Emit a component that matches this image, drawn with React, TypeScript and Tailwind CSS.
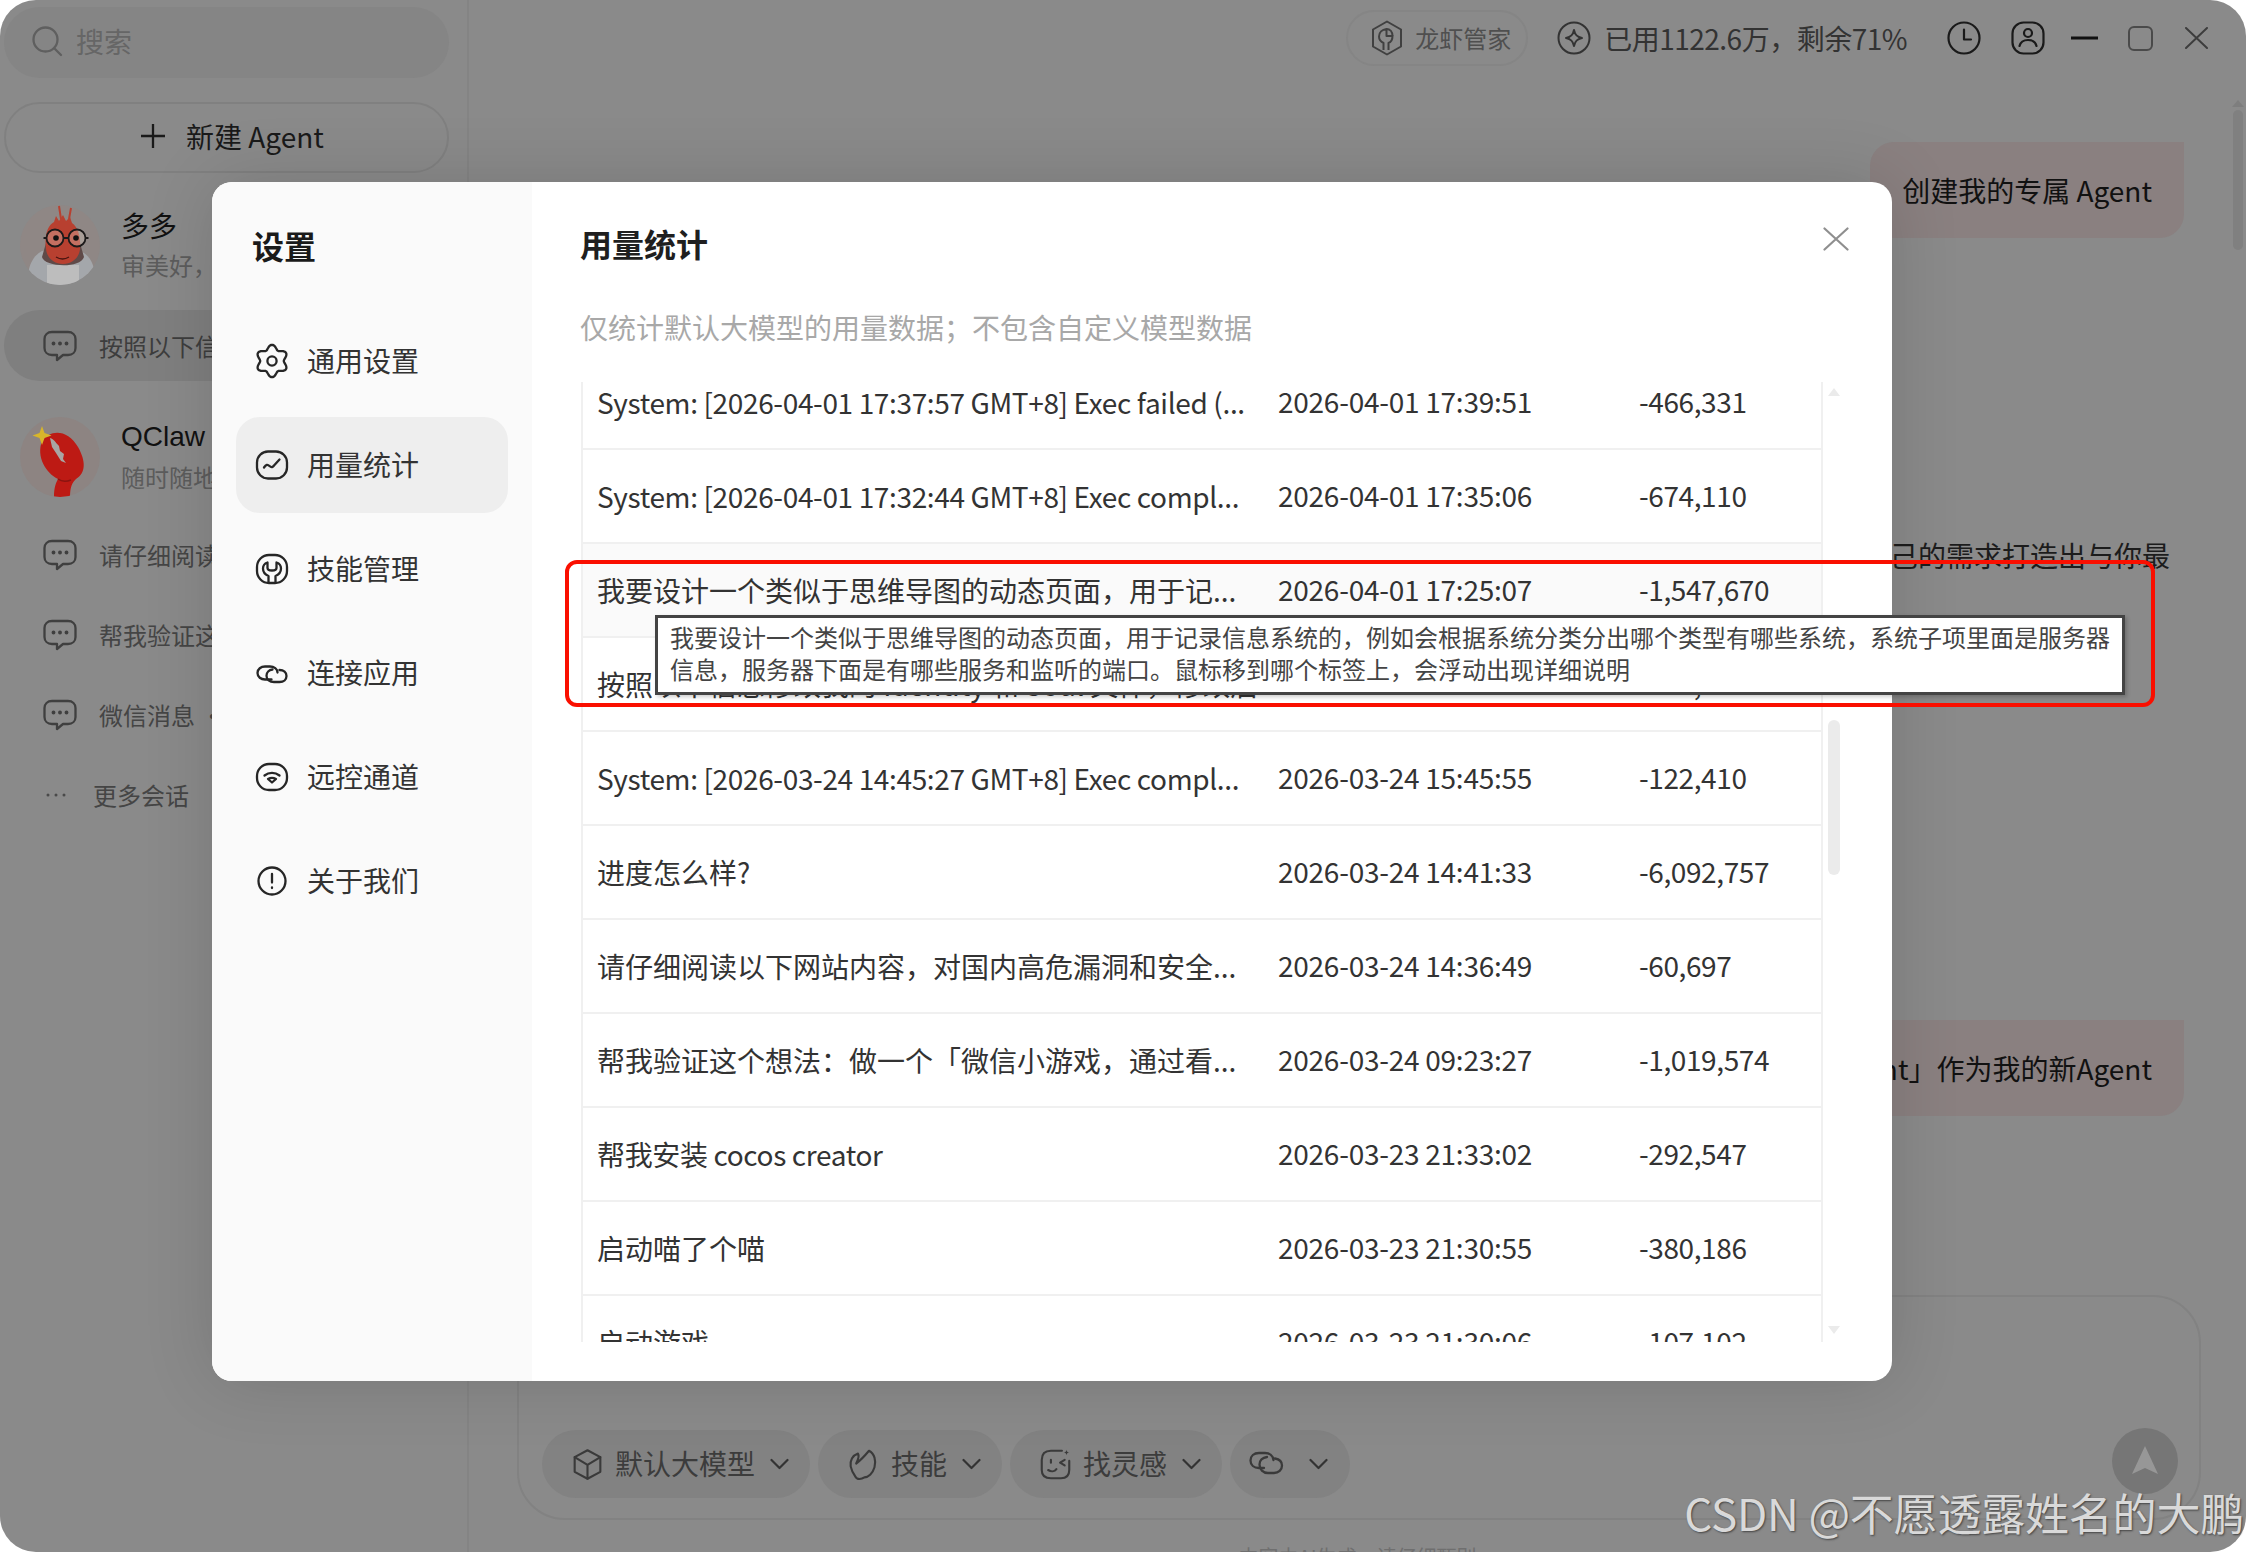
import type { ReactNode } from 'react';

function gearPath() {
  const pts: string[] = [];
  for (let i = 0; i < 96; i++) {
    const t = (i / 96) * Math.PI * 2;
    const r = 14 + 2.2 * Math.cos(6 * t);
    pts.push(`${(18 + r * Math.sin(t)).toFixed(2)} ${(18 - r * Math.cos(t)).toFixed(2)}`);
  }
  return 'M' + pts.join('L') + 'Z';
}

function Icon({ className = '', size = 36, children }: { className?: string; size?: number; children: ReactNode }) {
  return (
    <svg
      viewBox="0 0 36 36"
      width={size}
      height={size}
      fill="none"
      stroke="currentColor"
      strokeWidth={2.3}
      strokeLinecap="round"
      strokeLinejoin="round"
      className={`shrink-0 ${className}`}
    >
      {children}
    </svg>
  );
}

const navItems: { label: string; active?: boolean; icon: ReactNode }[] = [
  {
    label: '通用设置',
    icon: (
      <>
        <path d={gearPath()} />
        <circle cx="18" cy="18" r="4.6" />
      </>
    ),
  },
  {
    label: '用量统计',
    active: true,
    icon: (
      <>
        <rect x="3" y="4.5" width="30" height="27" rx="11" />
        <path d="M10 20.5c2-3 3.5-3.5 5.5-1.5s3.5 1 4.5-.5l5.5-6" />
      </>
    ),
  },
  {
    label: '技能管理',
    icon: (
      <>
        <rect x="3" y="4" width="30" height="28" rx="12" />
        <path d="M14.5 31.5V25c-3.500-1.500-5.500-4-5.500-7.500 0-3 1.500-5 4.500-6v5.500c0 1.500 2 2.500 4.500 2.500s4.500-1 4.500-2.500v-5.500c3 1 4.500 3 4.500 6 0 3.500-2 6-5.500 7.500v6.500" />
      </>
    ),
  },
  {
    label: '连接应用',
    icon: (
      <>
        <path d="M17.500 24.500h-6.500c-4 0-7.500-2.500-7.500-6.500s3.500-6.500 7.500-6.500h5c4 0 7.500 2.500 7.500 6" />
        <path d="M18.500 14.500c-3.500.5-6 3-6 6.200 0 3.800 3.200 6.300 7.500 6.300h5.500c4.200 0 7-2.500 7-6s-2.800-6-7-6" />
      </>
    ),
  },
  {
    label: '远控通道',
    icon: (
      <>
        <rect x="3" y="5" width="30" height="26" rx="12" />
        <path d="M10.500 16.500c4.500-3.500 10.500-3.500 15 0" />
        <path d="M18 23.500l-4-3.500c2.500-1.500 5.500-1.500 8 0z" />
      </>
    ),
  },
  {
    label: '关于我们',
    icon: (
      <>
        <circle cx="18" cy="18" r="13.500" />
        <path d="M18 11v8.500" />
        <path d="M18 24.500v.5" />
      </>
    ),
  },
];

const rows: { text: string; time: string; amount: string; hover?: boolean; latin?: boolean }[] = [
  { text: 'System: [2026-04-01 17:37:57 GMT+8] Exec failed (...', time: '2026-04-01 17:39:51', amount: '-466,331', latin: true },
  { text: 'System: [2026-04-01 17:32:44 GMT+8] Exec compl...', time: '2026-04-01 17:35:06', amount: '-674,110', latin: true },
  { text: '我要设计一个类似于思维导图的动态页面，用于记...', time: '2026-04-01 17:25:07', amount: '-1,547,670', hover: true },
  { text: '按照以下信息修改我的 Identity 和 Soul 文件，修改后', time: '2026-03-31 11:20:16', amount: '-208,415' },
  { text: 'System: [2026-03-24 14:45:27 GMT+8] Exec compl...', time: '2026-03-24 15:45:55', amount: '-122,410', latin: true },
  { text: '进度怎么样?', time: '2026-03-24 14:41:33', amount: '-6,092,757' },
  { text: '请仔细阅读以下网站内容，对国内高危漏洞和安全...', time: '2026-03-24 14:36:49', amount: '-60,697' },
  { text: '帮我验证这个想法：做一个「微信小游戏，通过看...', time: '2026-03-24 09:23:27', amount: '-1,019,574' },
  { text: '帮我安装 cocos creator', time: '2026-03-23 21:33:02', amount: '-292,547', latin: true },
  { text: '启动喵了个喵', time: '2026-03-23 21:30:55', amount: '-380,186' },
  { text: '启动游戏', time: '2026-03-23 21:30:06', amount: '-107,102' },
];

function ChatIcon() {
  return (
    <Icon className="text-[#3f3f3f]">
      <path d="M10 4h16c4.500 0 7.500 3 7.500 7v9c0 4-3 7-7.500 7h-5l-6 5v-5h-5c-4.500 0-7.500-3-7.500-7v-9c0-4 3-7 7.500-7z" />
      <circle cx="11.500" cy="15.500" r=".8" fill="currentColor" />
      <circle cx="18" cy="15.500" r=".8" fill="currentColor" />
      <circle cx="24.500" cy="15.500" r=".8" fill="currentColor" />
    </Icon>
  );
}

function Chevron({ className = '' }: { className?: string }) {
  return (
    <svg viewBox="0 0 19 12" width={19} height={12} fill="none" stroke="#333" strokeWidth={2.2} strokeLinecap="round" strokeLinejoin="round" className={`shrink-0 ${className}`}>
      <path d="M1.500 2l8 8 8-8" />
    </svg>
  );
}

function DuoAvatar() {
  return (
    <svg viewBox="0 0 80 80" width={80} height={80} className="shrink-0">
      <defs>
        <clipPath id="duo-clip">
          <circle cx="40" cy="40" r="40" />
        </clipPath>
      </defs>
      <g clipPath="url(#duo-clip)">
        <rect width="80" height="80" fill="#8f8785" />
        <path d="M8 80c-1-16 3-28 14-34l8-2h26l8 4c9 6 12 18 11 32z" fill="#a4a7ab" />
        <path d="M27 80V60h32v20z" fill="#bdbdbd" />
        <path d="M22 52c2 10 38 12 42 0l-4-14H26z" fill="#5f4a48" />
        <path d="M26 44c-2-14 2-24 8-27l2-6 3 5 4-6 3 6 4-4 2 6c6 4 9 14 8 26-1 9-8 15-17 15s-16-6-17-15z" fill="#b84030" />
        <path d="M36 52c4 2.500 9 2.500 13 0" stroke="#4a1410" strokeWidth="1.400" fill="none" />
      </g>
      <path d="M41 14L39 1M49 14l2-11" stroke="#b84030" strokeWidth="2" fill="none" />
      <g fill="none" stroke="#1c1a1a" strokeWidth="1.800">
        <circle cx="35" cy="33" r="8.500" fill="#d9c9bd" fillOpacity="0.35" />
        <circle cx="57" cy="33" r="8.500" fill="#d9c9bd" fillOpacity="0.35" />
        <path d="M43.500 33h5M26.500 33h-3M65.500 33h3" />
      </g>
      <circle cx="36" cy="33" r="2.800" fill="#111" />
      <circle cx="56" cy="33" r="2.800" fill="#111" />
    </svg>
  );
}

function ClawAvatar() {
  return (
    <svg viewBox="0 0 80 80" width={80} height={80} className="shrink-0">
      <defs>
        <clipPath id="claw-clip">
          <circle cx="40" cy="40" r="40" />
        </clipPath>
      </defs>
      <g clipPath="url(#claw-clip)">
        <rect width="80" height="80" fill="#8d8482" />
        <path d="M22 24C30 12 48 12 58 30c8 14 8 26-2 32-4 4-6 8-6 18H34c0-10 2-14 4-18C26 56 16 40 22 24z" fill="#bd1a14" />
        <path d="M30 21c4 1 6 5 9 8l1 5 4 3-1 5 3 4-5-2-5-8-4-6z" fill="#a9a5a3" />
        <path d="M38 62c4 3 8 3 13 1" stroke="#8a1410" strokeWidth="1.500" fill="none" />
      </g>
      <path d="M22 9l2.500 7 7 2.500-7 2.500-2.500 7-2.500-7-7-2.500 7-2.500z" fill="#d8b52a" />
    </svg>
  );
}

function Session({ label }: { label: string }) {
  return (
    <div className="flex h-[80px] items-center gap-[21px] pl-[38px]">
      <ChatIcon />
      <span className="whitespace-nowrap text-[24px] text-[#454545]">{label}</span>
    </div>
  );
}

function LeftPanel() {
  return (
    <aside className="flex w-[469px] shrink-0 flex-col border-r-2 border-[#848484] pl-[4px] pr-[18px] pt-[7px]">
      <div className="flex h-[71px] shrink-0 items-center gap-[13px] rounded-full bg-[#858585] pb-[4px] pl-[27px]">
        <svg viewBox="0 0 32 32" width={32} height={32} fill="none" stroke="#5f5f5f" strokeWidth={2.300} strokeLinecap="round">
          <circle cx="14.500" cy="14.500" r="12" />
          <path d="M24 24l6 6" />
        </svg>
        <span className="text-[28px] text-[#666]">搜索</span>
      </div>
      <div className="mt-[24px] flex h-[71px] shrink-0 items-center justify-center gap-[21px] rounded-full border-2 border-[#808080] pb-[4px] pl-[12px] text-[28px] text-[#1a1a1a]">
        <svg viewBox="0 0 24 24" width={24} height={24} fill="none" stroke="#1a1a1a" strokeWidth={2.300}>
          <path d="M12 0v24M0 12h24" />
        </svg>
        <span>新建 Agent</span>
      </div>
      <div className="ml-[16px] mt-[32px] flex h-[80px] shrink-0 items-center gap-[21px]">
        <DuoAvatar />
        <div className="flex flex-col gap-[6px] pb-[3px]">
          <span className="text-[28px] leading-[36px] text-[#111]">多多</span>
          <span className="whitespace-nowrap text-[24px] leading-[32px] text-[#5c5c5c]">审美好，有想法的搭子</span>
        </div>
      </div>
      <div className="mt-[25px] flex h-[71px] shrink-0 items-center gap-[21px] rounded-full bg-[#7f7f7f] pl-[38px]">
        <ChatIcon />
        <span className="whitespace-nowrap text-[24px] text-[#3d3d3d]">按照以下信息修改</span>
      </div>
      <div className="ml-[16px] mt-[36px] flex h-[80px] shrink-0 items-center gap-[21px]">
        <ClawAvatar />
        <div className="flex flex-col gap-[6px] pb-[3px]">
          <span className="font-['Liberation_Sans',sans-serif] text-[28px] leading-[36px] text-[#111]">QClaw</span>
          <span className="whitespace-nowrap text-[24px] leading-[32px] text-[#5c5c5c]">随时随地帮你做事</span>
        </div>
      </div>
      <div className="mt-[18px] flex flex-col">
        <Session label="请仔细阅读以下" />
        <Session label="帮我验证这个想" />
        <Session label="微信消息 · 今天" />
        <div className="flex h-[80px] items-center gap-[27px] pl-[42px] text-[#454545]">
          <svg viewBox="0 0 20 4" width={20} height={4} className="shrink-0">
            <circle cx="2" cy="2" r="1.500" fill="#4a4a4a" />
            <circle cx="10" cy="2" r="1.500" fill="#4a4a4a" />
            <circle cx="18" cy="2" r="1.500" fill="#4a4a4a" />
          </svg>
          <span className="text-[24px]">更多会话</span>
        </div>
      </div>
    </aside>
  );
}

function TopBar() {
  return (
    <div className="flex h-[76px] shrink-0 items-start justify-end pr-[38px] pt-[10px]">
      <div className="flex h-[56px] w-[182px] items-center gap-[11px] rounded-full border-2 border-[#858585] pl-[22px] text-[24px] text-[#4f4f4f]">
        <svg viewBox="0 0 34 36" width={34} height={36} fill="none" stroke="#404040" strokeWidth={2} strokeLinejoin="round" className="shrink-0">
          <path d="M17 1.500l14 8v17l-14 8-14-8v-17z" />
          <path d="M13.500 30v-7c-3-1.500-4.500-4-4.500-6.500 0-4 3-7 7.500-7.500V16h6c0 3.500-1.500 6-4 7v7" />
          <path d="M16.500 9c3.500 0 6 3 6 7" />
        </svg>
        <span>龙虾管家</span>
      </div>
      <div className="ml-[29px] flex h-[56px] items-center gap-[13px] text-[28px] tracking-[-0.5px] text-[#333]">
        <svg viewBox="0 0 34 34" width={34} height={34} fill="none" stroke="#333" strokeWidth={2} strokeLinejoin="round" className="shrink-0">
          <circle cx="17" cy="17" r="15.500" />
          <path d="M17 9c1 5 3 7 8 8-5 1-7 3-8 8-1-5-3-7-8-8 5-1 7-3 8-8z" />
        </svg>
        <span className="whitespace-nowrap">已用1122.6万，剩余71%</span>
      </div>
      <div className="ml-[40px] flex h-[56px] items-center gap-[30px]">
        <svg viewBox="0 0 34 34" width={34} height={34} fill="none" stroke="#1a1a1a" strokeWidth={2.200} strokeLinecap="round" strokeLinejoin="round">
          <circle cx="17" cy="17" r="15.500" />
          <path d="M17 8.500V18.500h7" />
        </svg>
        <svg viewBox="0 0 34 34" width={34} height={34} fill="none" stroke="#1a1a1a" strokeWidth={2.200} strokeLinecap="round">
          <rect x="1.500" y="1.500" width="31" height="31" rx="11" />
          <circle cx="17" cy="12" r="4" />
          <path d="M8.500 25c1-4 4.500-6 8.500-6s7.500 2 8.500 6" />
        </svg>
        <svg viewBox="0 0 27 4" width={27} height={4} className="ml-[-4px]">
          <rect width="27" height="3" y=".5" fill="#111" />
        </svg>
        <svg viewBox="0 0 25 25" width={25} height={25} fill="none" stroke="#4a4a4a" strokeWidth={2}>
          <rect x="1" y="1" width="23" height="23" rx="5" />
        </svg>
        <svg viewBox="0 0 23 22" width={23} height={22} fill="none" stroke="#3d3d3d" strokeWidth={2} strokeLinecap="round" className="ml-[2px]">
          <path d="M1 1l21 20M22 1L1 21" />
        </svg>
      </div>
    </div>
  );
}

function Pill({ icon, label, textGap = 'gap-[11px]', width }: { icon: ReactNode; label?: string; textGap?: string; width: string }) {
  return (
    <div className={`flex h-[68px] items-center rounded-full bg-[#828282] pl-[29px] ${textGap} ${width}`}>
      {icon}
      {label && <span className="whitespace-nowrap pb-[3px] text-[28px] text-[#3c3c3c]">{label}</span>}
      <Chevron className="ml-[4px]" />
    </div>
  );
}

function ChatPanel() {
  return (
    <main className="relative flex h-[1552px] min-w-0 flex-1 flex-col overflow-hidden">
      <TopBar />
      <div className="ml-auto mr-[62px] mt-[66px] flex h-[96px] shrink-0 items-center rounded-[24px] rounded-tr-none bg-[#8a8080] px-[32px] text-[28px] text-[#111]">
        创建我的专属 Agent
      </div>
      <p className="ml-auto mr-[76px] mt-[297px] h-[40px] shrink-0 whitespace-nowrap text-[28px] leading-[40px] text-[#1c1c1c]">
        告诉我你自己的需求打造出与你最
      </p>
      <div className="ml-auto mr-[62px] mt-[445px] flex h-[96px] shrink-0 items-center whitespace-nowrap rounded-[24px] rounded-tr-none bg-[#8a8080] px-[32px] text-[28px] text-[#111]">
        创建「Agent」作为我的新Agent
      </div>
      <div className="ml-[48px] mr-[45px] mt-[179px] flex h-[225px] shrink-0 items-end justify-between rounded-[48px] border-2 border-[#828282] pb-[20px] pl-[23px] pr-[21px]">
        <div className="flex gap-[8px]">
          <Pill
            width="w-[268px]"
            icon={
              <Icon size={33} className="text-[#3a3a3a]">
                <path d="M18 2.500l14 7.500v16l-14 7.500-14-7.500V10z" />
                <path d="M4 10l14 8.500L32 10M18 18.500v15" />
              </Icon>
            }
            label="默认大模型"
          />
          <Pill
            width="w-[184px]"
            icon={
              <Icon size={33} className="text-[#3a3a3a]">
                <path d="M24 3c6 3 8 11 6 18-2 7-7 11-11 11-3 2-8 3-10-1-2-3-4-6-5-11-1-6 2-12 8-14 2 3 0 7-2 11 4-3 9-8 14-14z" />
              </Icon>
            }
            label="技能"
          />
          <Pill
            width="w-[212px]"
            icon={
              <Icon size={33} className="text-[#3a3a3a]">
                <path d="M25 3H13C6 3 3 7 3 13v11c0 6 4 9 10 9h11c6 0 9-3 9-9V14" />
                <path d="M13 13v3M28 13l-5 3 5 3" />
                <path d="M10 24c3 2 7 2 9-1" />
                <path d="M30 2c.4 2 1 3 3 3-2 .3-2.600 1-3 3-.4-2-1-2.700-3-3 2-.3 2.600-1 3-3z" fill="currentColor" stroke="none" />
              </Icon>
            }
            label="找灵感"
          />
          <Pill
            width="w-[120px]"
            textGap="gap-[21px]"
            icon={
              <Icon size={36} className="ml-[-11px] text-[#3a3a3a]">
                <path d="M16 22h-5C6 22 2.500 19 2.500 14.500S6 7 11 7h6c4.500 0 8 2.500 8.500 7" />
                <path d="M19 11c-4.500.5-7.500 3.500-7.500 7.500 0 5 3.500 8.500 8.500 8.500h6c4.500 0 8-3 8-7.500S30 13 27 12.500" />
              </Icon>
            }
          />
        </div>
        <div className="mb-[4px] flex h-[66px] w-[66px] items-center justify-center rounded-full bg-[#767676]">
          <svg viewBox="0 0 28 32" width={28} height={32}>
            <path d="M14 1l13 28-13-6-13 6z" fill="#979797" />
          </svg>
        </div>
      </div>
      <p className="mt-[23px] shrink-0 whitespace-nowrap text-center text-[20px] leading-[28px] text-[#6f6f6f]">内容由AI生成，请仔细甄别</p>
      <div className="absolute right-[2px] top-[100px] flex flex-col items-center">
        <div className="h-0 w-0 border-x-[6px] border-b-[7px] border-x-transparent border-b-[#7e7e7e]" />
        <div className="mt-[3px] h-[140px] w-[10px] rounded-full bg-[#808080]" />
      </div>
    </main>
  );
}

function SettingsNav() {
  return (
    <nav className="flex w-[320px] shrink-0 flex-col bg-[#fafafa] pt-[43px]">
      <h2 className="pl-[40px] text-[32px] font-bold leading-[40px] text-[#1a1a1a]">设置</h2>
      <ul className="mt-[48px] flex flex-col gap-[8px] px-[24px]">
        {navItems.map((item) => (
          <li
            key={item.label}
            className={`flex h-[96px] items-center gap-[17px] rounded-[24px] pl-[18px] text-[28px] text-[#333] ${item.active ? 'bg-[#eeeeee]' : ''}`}
          >
            <Icon className="text-[#262626]">{item.icon}</Icon>
            <span className="pb-[3px]">{item.label}</span>
          </li>
        ))}
      </ul>
    </nav>
  );
}

function UsageTable() {
  return (
    <div className="mt-[35px] flex h-[960px]">
      <div className="h-full w-[1242px] overflow-hidden border-x-2 border-[#f0f0f0]">
        <div className="mt-[-26px]">
          {rows.map((row) => (
            <div
              key={row.time}
              className={`flex h-[94px] items-center border-b-2 border-[#f0f0f0] pl-[14px] text-[28px] text-[#333] ${row.hover ? 'bg-[#fafafa]' : ''}`}
            >
              <span className={`w-[681px] shrink-0 overflow-hidden whitespace-nowrap ${row.latin ? 'tracking-[-0.36px]' : ''}`}>{row.text}</span>
              <span className="w-[361px] shrink-0 whitespace-nowrap pb-[3px] tracking-[-0.25px]">{row.time}</span>
              <span className="whitespace-nowrap pb-[3px] tracking-[-0.4px]">{row.amount}</span>
            </div>
          ))}
        </div>
      </div>
      <div className="ml-[5px] flex w-[12px] flex-col items-center pt-[6px]">
        <div className="h-0 w-0 border-x-[6px] border-b-[8px] border-x-transparent border-b-[#ebebeb]" />
        <div className="mt-[324px] h-[155px] w-[12px] rounded-full bg-[#ebebeb]" />
        <div className="mt-[451px] h-0 w-0 border-x-[6px] border-t-[8px] border-x-transparent border-t-[#ebebeb]" />
      </div>
    </div>
  );
}

function SettingsDialog() {
  return (
    <div className="absolute left-[212px] top-[182px] flex h-[1199px] w-[1680px] overflow-hidden rounded-[20px] bg-white shadow-[0_0_70px_rgba(0,0,0,0.14)]">
      <SettingsNav />
      <section className="relative flex-1 pl-[49px] pt-[41px]">
        <h1 className="ml-[-1px] text-[32px] font-bold leading-[40px] text-[#1f1f1f]">用量统计</h1>
        <p className="ml-[-1px] mt-[44px] text-[28px] leading-[40px] text-[#a8a8a8]">仅统计默认大模型的用量数据；不包含自定义模型数据</p>
        <UsageTable />
        <svg viewBox="0 0 26 24" width={26} height={24} fill="none" stroke="#8f8f8f" strokeWidth={2.200} strokeLinecap="round" className="absolute right-[43px] top-[45px]">
          <path d="M1.500 1.500l23 21M24.500 1.500l-23 21" />
        </svg>
      </section>
    </div>
  );
}

export default function App() {
  return (
    <div className="relative h-[1552px] w-[2246px] overflow-hidden bg-white font-['Noto_Sans_CJK_SC',sans-serif]">
      <div className="flex h-full overflow-hidden rounded-[36px] bg-[#8a8a8a]">
        <LeftPanel />
        <ChatPanel />
      </div>
      <SettingsDialog />
      {/* tooltip plus the red box somebody drew over the screenshot */}
      <div className="absolute left-[655px] top-[615px] h-[80px] w-[1470px] whitespace-nowrap border-[3px] border-[#444] bg-white pl-[12px] pt-[3px] text-[24px] leading-[32px] text-[#444] shadow-[2px_2px_4px_rgba(0,0,0,0.2)]">
        <div>我要设计一个类似于思维导图的动态页面，用于记录信息系统的，例如会根据系统分类分出哪个类型有哪些系统，系统子项里面是服务器</div>
        <div>信息，服务器下面是有哪些服务和监听的端口。鼠标移到哪个标签上，会浮动出现详细说明</div>
      </div>
      <div className="absolute left-[565px] top-[560px] h-[147px] w-[1590px] rounded-[12px] border-[4px] border-[#fa0f00]" />
      <span className="absolute right-[2px] top-[1484px] whitespace-nowrap text-[44px] leading-[56px] tracking-[-0.2px] text-[#d9d9d9] [text-shadow:1px_1px_2px_#444]">
        CSDN @不愿透露姓名的大鹏
      </span>
    </div>
  );
}
